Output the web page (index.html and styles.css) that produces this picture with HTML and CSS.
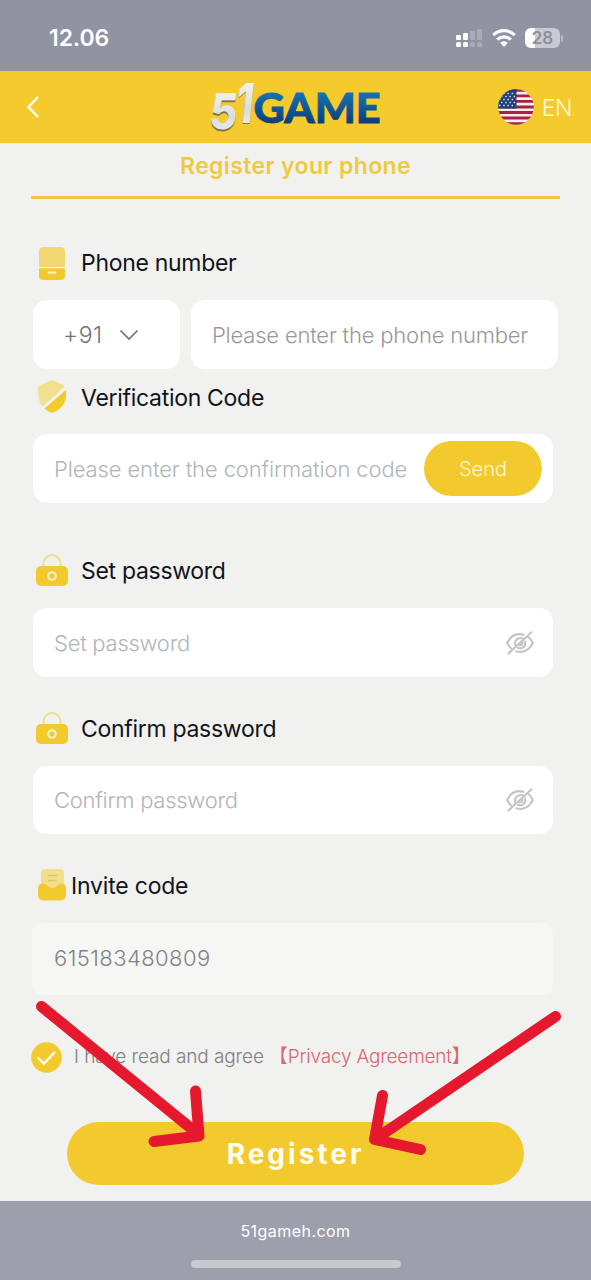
FILE: index.html
```html
<!DOCTYPE html>
<html lang="en">
<head>
<meta charset="utf-8">
<title>Register</title>
<link rel="stylesheet" href="styles.css">
</head>
<body>
<svg class="defs" width="0" height="0" aria-hidden="true">
  <symbol id="lock" viewBox="0 0 32 32">
    <path d="M7.500 14V9.500a8.500 8.500 0 0 1 17 0V14" fill="none" stroke="#ecdf8d" stroke-width="2"/>
    <rect x="0" y="12" width="32" height="20" rx="5" fill="#f2ca2e"/>
    <circle cx="16" cy="22" r="4.800" fill="#faf0b4"/>
    <circle cx="16" cy="22" r="2.600" fill="#e3c858"/>
  </symbol>
  <symbol id="eye" viewBox="0 0 28 24">
    <g fill="none" stroke="#c3c3c3" stroke-width="2" stroke-linecap="round">
      <path d="M17.500 3.700C9 1.500 4 6 1.200 12c1 2.200 2.300 4 4 5.400M22.500 6.300c2 1.400 3.400 3.300 4.300 5.700-3 6.700-9.500 10.400-16.500 8.300"/>
      <path d="M17.200 7.600C12.500 5.300 8 9.500 9.200 14M19 10.500c1.400 4.500-2.800 8.200-7 6.300M16.300 11c.7 2-.7 3.600-2.800 3.200"/>
      <path d="M2.500 22.500 25.500 1.300"/>
    </g>
  </symbol>
</svg>
<div class="screen">
  <div class="status">
    <span class="clock">12.06</span>
    <div class="indicators">
      <svg width="26" height="18" viewBox="0 0 26 18">
        <g fill="#fff"><rect x="0" y="6" width="5" height="5" rx="1"/><rect x="7" y="4" width="5" height="7" rx="1"/><rect x="0" y="13" width="5" height="5" rx="1.500"/><rect x="7" y="13" width="5" height="5" rx="1.500"/></g>
        <g fill="#aaabb9"><rect x="14" y="2" width="5" height="9" rx="1"/><rect x="21" y="0" width="5" height="11" rx="1"/><rect x="14" y="13" width="5" height="5" rx="1.500"/><rect x="21" y="13" width="5" height="5" rx="1.500"/></g>
      </svg>
      <svg class="wifi" width="24" height="18" viewBox="0 0 24 18">
        <g fill="none" stroke="#fff" stroke-width="3.200"><path d="M1.200 6.200c6.200-6 15.400-6 21.600 0"/><path d="M5.200 10.600c4-3.700 9.600-3.700 13.600 0"/></g>
        <path d="M8 13.700c2.400-2.100 5.600-2.100 8 0L12 18z" fill="#fff"/>
      </svg>
      <div class="battery"><span>28</span></div><i class="cap"></i>
    </div>
  </div>
  <header class="topbar">
    <svg class="back" width="14" height="24" viewBox="0 0 14 24"><path d="M12 2 2.500 12 12 22" fill="none" stroke="#fff" stroke-width="2.400"/></svg>
    <svg class="logo" width="186" height="64" viewBox="-6 -4 186 64">
      <defs>
        <linearGradient id="silver" x1="0" y1="0" x2="0" y2="1"><stop offset="0" stop-color="#fafaf8"/><stop offset=".6" stop-color="#dcdcd8"/><stop offset="1" stop-color="#f4f4f0"/></linearGradient>
        <linearGradient id="blue" x1="0" y1="0" x2="0" y2="1"><stop offset=".2" stop-color="#1672b4"/><stop offset=".85" stop-color="#0b3d78"/></linearGradient>
      </defs>
      <g class="digits" fill="#7d7350" transform="translate(-.2 1.800)">
        <text transform="translate(0 50) skewX(-6)" font-size="49" textLength="28" lengthAdjust="spacingAndGlyphs">5</text>
        <text transform="translate(26 43.500) skewX(-6)" font-size="55" textLength="18" lengthAdjust="spacingAndGlyphs">1</text>
      </g>
      <g class="digits" fill="url(#silver)">
        <text transform="translate(0 50) skewX(-6)" font-size="49" textLength="28" lengthAdjust="spacingAndGlyphs">5</text>
        <text transform="translate(26 43.500) skewX(-6)" font-size="55" textLength="18" lengthAdjust="spacingAndGlyphs">1</text>
      </g>
      <text class="game" x="45.500" y="43.500" font-size="41" textLength="127" lengthAdjust="spacingAndGlyphs" fill="url(#blue)" stroke="url(#blue)">GAME</text>
    </svg>
    <div class="lang">
      <svg width="36" height="36" viewBox="0 0 36 36">
        <clipPath id="round"><circle cx="18" cy="18" r="17.800"/></clipPath>
        <g clip-path="url(#round)">
          <path fill="#f6eef0" d="M0 0h36v36H0z"/>
          <path stroke="#a8213f" stroke-width="2.800" d="M0 1.400h36M0 6.900h36M0 12.400h36M0 18h36M0 23.500h36M0 29h36M0 34.600h36"/>
          <path fill="#1c3f7c" d="M0 0h18.500v19.400H0z"/>
          <path stroke="#dbe4f4" stroke-width="1.500" stroke-dasharray="1.500 2.700" d="M1 4.500h17M3 7.500h15M1 10.500h17M3 13.500h15M1 16.500h17"/>
        </g>
      </svg>
      <span>EN</span>
    </div>
  </header>
  <main class="form">
    <h1 class="tab"><span>Register your phone</span></h1>

    <div class="label l-phone">
      <svg width="32" height="34" viewBox="0 0 32 34"><path d="M7 1h18a4 4 0 0 1 4 4v16H3V5a4 4 0 0 1 4-4z" fill="#f1d873"/><path d="M3 22.300h26V30a4 4 0 0 1-4 4H7a4 4 0 0 1-4-4z" fill="#f2ca2e"/><path d="M12.500 26.500h7" stroke="#fdf3c4" stroke-width="2" stroke-linecap="round"/></svg>
      <span>Phone number</span>
    </div>
    <div class="phone-row">
      <div class="box code"><span>+91</span><svg width="20" height="12" viewBox="0 0 20 12"><path d="m1.500 1.500 8.500 8.500 8.500-8.500" fill="none" stroke="#707278" stroke-width="1.700"/></svg></div>
      <div class="box number"><span>Please enter the phone number</span></div>
    </div>

    <div class="label l-code">
      <svg width="32" height="34" viewBox="0 0 32 34"><path d="M14 .800q2-1.100 4 0l9 4q1.300.6 1.500 2L6.500 26.500C2.800 22 1.700 15 2.300 7.500q.2-1.600 1.700-2.300z" fill="#f1e08e"/><path d="M30 10c1 10.500-2.500 18-11.500 22q-2.500 1-5 0c-2-.9-3.500-2-5-3.400z" fill="#f2ca2e"/></svg>
      <span>Verification Code</span>
    </div>
    <div class="box verify"><span class="t-conf">Please enter the confirmation code</span><button class="send"><span>Send</span></button></div>

    <div class="label l-set"><svg class="lock" width="32" height="32"><use href="#lock"/></svg><span>Set password</span></div>
    <div class="box"><span>Set password</span><svg width="28" height="24"><use href="#eye"/></svg></div>

    <div class="label l-confirm"><svg class="lock" width="32" height="32"><use href="#lock"/></svg><span>Confirm password</span></div>
    <div class="box confirm"><span>Confirm password</span><svg width="28" height="24"><use href="#eye"/></svg></div>

    <div class="label l-invite">
      <svg width="30" height="34" viewBox="0 0 30 34"><rect x="4" y="1" width="23" height="26" rx="4" fill="#f2df8c"/><path d="M11 7.500h9M11 12.500h9" stroke="#dec562" stroke-width="1.600"/><path d="M6 15.500c3.500 0 5.500 4.500 9.500 4.500s5.500-4.500 9-4.500c3.500 0 4.500 2 4.500 5v7a5 5 0 0 1-5 5H6a5 5 0 0 1-5-5v-7c0-3 1.600-5 5-5z" fill="#f2ca2e"/></svg>
      <span>Invite code</span>
    </div>
    <div class="box invite"><span>615183480809</span></div>

    <div class="agree">
      <svg width="31" height="31" viewBox="0 0 31 31"><circle cx="15.500" cy="15.500" r="15.300" fill="#f2ca2e"/><path d="m6.700 15.500 6.200 6L24 10" fill="none" stroke="#fff" stroke-width="2.400"/></svg>
      <span class="t-agree">I have read and agree</span>
      <span class="privacy">【Privacy Agreement】</span>
    </div>
    <button class="register"><span>Register</span></button>
  </main>
  <footer class="browser"><span>51gameh.com</span><i class="home"></i></footer>
  <svg class="arrows" width="591" height="220" viewBox="0 990 591 220">
    <g fill="none" stroke="#e5182d" stroke-width="11" stroke-linecap="round" stroke-linejoin="round">
      <path d="M41.500 1006.500 198 1134M195.500 1091l3.500 45-45 5.500"/>
      <path d="M555.500 1016.500 377 1138M382.500 1095.500l-8 44 46 10"/>
    </g>
  </svg>
</div>
</body>
</html>
```
FILE: styles.css
```css
* { box-sizing: border-box; }
body { margin: 0; font-family: Inter, "Noto Sans CJK SC", sans-serif; }
.defs { position: absolute; }
.screen { position: relative; width: 591px; height: 1280px; overflow: hidden; display: flex; flex-direction: column; background: #f1f1ef; }
svg { display: block; flex: none; }
span { white-space: nowrap; }
button { border: 0; padding: 0; font-family: inherit; background: #f2ca2e; color: #fff; }

.status { height: 71px; flex: none; padding: 5px 28px 0 49px; display: flex; align-items: center; justify-content: space-between; background: #9192a2; }
.clock { color: #fff; font-size: 23px; font-weight: 600; letter-spacing: -.1px; }
.indicators { display: flex; align-items: center; }
.wifi { margin: 0 9px 0 10px; }
.battery { width: 35px; height: 20px; border-radius: 6px; display: flex; align-items: center; justify-content: center; background: linear-gradient(90deg, #fff 28%, #c8c9d2 28%); color: #8d8e9c; font-size: 17px; font-weight: 600; }
.cap { width: 2px; height: 7px; margin-left: 1px; border-radius: 0 2px 2px 0; background: #b9bac5; }

.topbar { height: 72px; flex: none; padding: 0 19px 0 26px; display: flex; align-items: center; background: #f4ca2c; }
.logo { margin-left: 162px; overflow: visible; }
.digits { font-family: Inter, sans-serif; font-weight: 800; }
.game { font-family: Lato, sans-serif; font-weight: 900; stroke-width: .9px; }
.lang { margin-left: auto; display: flex; align-items: center; gap: 8px; color: #fff9dc; font-size: 23px; font-weight: 300; letter-spacing: -.4px; }
.lang span { padding-top: 2px; }

.form { flex: 1; padding: 0 31px; display: flex; flex-direction: column; }
.tab { height: 56px; margin: 0; padding-top: 9px; text-align: center; border-bottom: 3px solid #ecc940; color: #eeca43; font-size: 23px; line-height: 28px; font-weight: 600; letter-spacing: .36px; }
.label { height: 36px; padding-left: 5px; display: flex; align-items: center; gap: 13px; color: #11131c; font-size: 23px; letter-spacing: -.3px; }
.label span { padding-top: 2px; }
.lock { margin-bottom: 1px; }
.l-phone { margin-top: 45px; }
.l-phone svg { margin-top: 1px; }
.l-code { margin-top: 10px; }
.l-code span { padding-top: 1px; }
.l-set { margin-top: 49px; }
.l-confirm { margin-top: 33px; }
.l-invite { margin-top: 33px; padding-left: 6px; gap: 4px; letter-spacing: -.2px; }
.box { height: 69px; width: 520px; margin: 20px 0 0 2px; padding: 0 19px 0 21px; border-radius: 14px; display: flex; align-items: center; justify-content: space-between; background: #fff; color: #b0b4b9; font-size: 22px; font-weight: 300; letter-spacing: -.26px; }
.phone-row { display: flex; gap: 11px; }
.phone-row .box { width: 367px; margin-right: 0; margin-left: 0; color: #98989a; letter-spacing: -.2px; }
.phone-row .code { width: 147px; margin-left: 2px; padding: 0 41px 0 30px; color: #707278; font-size: 23px; letter-spacing: .6px; }
.verify { margin-top: 19px; padding: 0 11px 0 21px; letter-spacing: -.12px; }
.send { width: 118px; height: 55px; border-radius: 28px; color: #fff6d2; font-size: 20px; font-weight: 300; }
.confirm { height: 68px; }
.invite { height: 72px; width: 521px; margin-left: 1px; padding: 0 22px 3px; background: #f6f6f4; color: #808386; border-radius: 10px; letter-spacing: .42px; }
.agree { height: 32px; margin-top: 46px; display: flex; align-items: center; color: #7e7f85; font-size: 19px; font-weight: 300; letter-spacing: -.1px; line-height: 24px; }
.t-agree { margin-left: 12px; }
.privacy { margin: 0 0 0 5px; color: #db6570; letter-spacing: -.2px; }
.register { width: 457px; height: 63px; margin: 49px 0 0 36px; border-radius: 32px; font-size: 28px; font-weight: 700; letter-spacing: 3px; color: #fffdf0; }
.browser { height: 79px; flex: none; padding-top: 20px; display: flex; flex-direction: column; align-items: center; background: #9e9fad; color: #fff; font-size: 16px; line-height: 20px; letter-spacing: .45px; }
.home { width: 210px; height: 8px; margin-top: 19px; border-radius: 4px; background: #c8c9cf; }
.arrows { position: absolute; left: 0; top: 990px; }
```
